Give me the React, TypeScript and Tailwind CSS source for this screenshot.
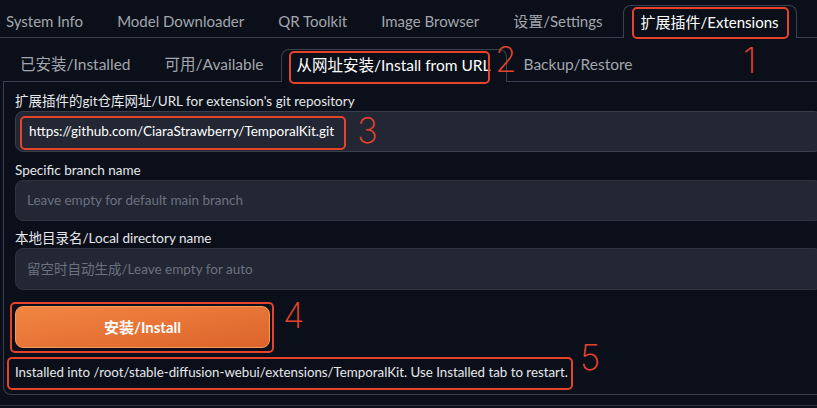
import React from 'react';

const topTabs = ['System Info', 'Model Downloader', 'QR Toolkit', 'Image Browser', '设置/Settings'];
const subTabs = ['已安装/Installed', '可用/Available'];

// red annotation frame drawn over the screenshot
function Mark({ className }: { className: string }) {
  return <div className={`pointer-events-none absolute rounded-[5px] border-2 border-[#e5432c] ${className}`} />;
}

function Num({ n, className }: { n: string; className: string }) {
  return (
    <span
      className={`pointer-events-none absolute font-['Inter',sans-serif] text-[35px] font-extralight leading-none text-[#e5432c] ${className}`}
    >
      {n}
    </span>
  );
}

export default function App() {
  return (
    <div className="relative h-[408px] w-[817px] overflow-hidden bg-[#0b0f19] font-['Lato','Noto_Sans_CJK_SC',sans-serif] text-[#e5e7eb]">
      {/* top tabs */}
      <div className="-ml-[11px] flex h-[38px] w-[860px] items-end whitespace-nowrap border-b border-[#374151]">
        {topTabs.map((t) => (
          <div key={t} className="flex h-[32px] shrink-0 items-center px-[17px] text-[15px] text-[#a2a6ad]">
            {t}
          </div>
        ))}
        <div className="-mb-px ml-[3px] flex h-[33px] shrink-0 items-center rounded-t-[8px] border border-b-0 border-[#374151] bg-[#0b0f19] px-[17px] text-[15px] text-white">
          扩展插件/Extensions
        </div>
      </div>

      {/* sub tabs */}
      <div className="ml-[3px] flex h-[44px] w-[860px] items-end whitespace-nowrap border-b border-[#374151]">
        {subTabs.map((t) => (
          <div key={t} className="flex h-[32px] shrink-0 items-center px-[17px] text-[15.5px] text-[#a2a6ad]">
            {t}
          </div>
        ))}
        <div className="-mb-px flex h-[33px] shrink-0 items-center rounded-t-[8px] border border-b-0 border-[#374151] bg-[#0b0f19] px-[15px] text-[15.5px] text-white">
          从网址安装/Install from URL
        </div>
        <div className="flex h-[32px] shrink-0 items-center px-[17px] text-[15.5px] text-[#a2a6ad]">Backup/Restore</div>
      </div>

      {/* panel */}
      <div className="ml-[3px] flex h-[313px] w-[860px] flex-col rounded-b-[8px] border border-t-0 border-[#374151] pl-[11px] pr-[40px] pt-[9px]">
        <label className="h-[20px] text-[13.5px] leading-[20px] text-[#e5e7eb]">扩展插件的git仓库网址/URL for extension's git repository</label>
        <div className="flex h-[41px] items-center rounded-[8px] border border-[#3a3f4b] bg-[#222733] px-[13px] text-[13.5px] text-white">
          https://github.com/CiaraStrawberry/TemporalKit.git
        </div>

        <label className="mt-[8px] h-[20px] text-[13.5px] leading-[20px] text-[#e5e7eb]">Specific branch name</label>
        <div className="flex h-[41px] items-center rounded-[8px] border border-[#2e3340] bg-[#222733] px-[11px] text-[13.5px] text-[#6b7180]">
          Leave empty for default main branch
        </div>

        <label className="mt-[7px] h-[20px] text-[13.5px] leading-[20px] text-[#e5e7eb]">本地目录名/Local directory name</label>
        <div className="flex h-[42px] items-center rounded-[8px] border border-[#2e3340] bg-[#222733] px-[11px] text-[13.5px] text-[#6b7180]">
          留空时自动生成/Leave empty for auto
        </div>

        <button className="mt-[16px] h-[42px] w-[255px] rounded-[8px] border border-[#f39a5c] bg-linear-to-br from-[#f28542] to-[#dc642c] text-[15px] font-bold text-white">
          安装/Install
        </button>

        <p className="mt-[14px] text-[13.3px] leading-[20px] text-[#e5e7eb]">
          Installed into /root/stable-diffusion-webui/extensions/TemporalKit. Use Installed tab to restart.
        </p>
      </div>

      <div className="mt-[10px] h-[20px] w-[860px] border-t border-[#2b303b]" />

      {/* annotations */}
      <Mark className="left-[632px] top-[7px] h-[32px] w-[157px]" />
      <Num n="1" className="left-[743px] top-[43px]" />
      <Mark className="left-[289px] top-[51px] h-[33px] w-[201px]" />
      <Num n="2" className="left-[495px] top-[42px]" />
      <Mark className="left-[20px] top-[116px] h-[34px] w-[326px]" />
      <Num n="3" className="left-[357px] top-[113px]" />
      <Mark className="left-[10px] top-[302px] h-[51px] w-[264px]" />
      <Num n="4" className="left-[283px] top-[298px]" />
      <Mark className="left-[7px] top-[357px] h-[33px] w-[566px]" />
      <Num n="5" className="left-[580px] top-[340px]" />
    </div>
  );
}
